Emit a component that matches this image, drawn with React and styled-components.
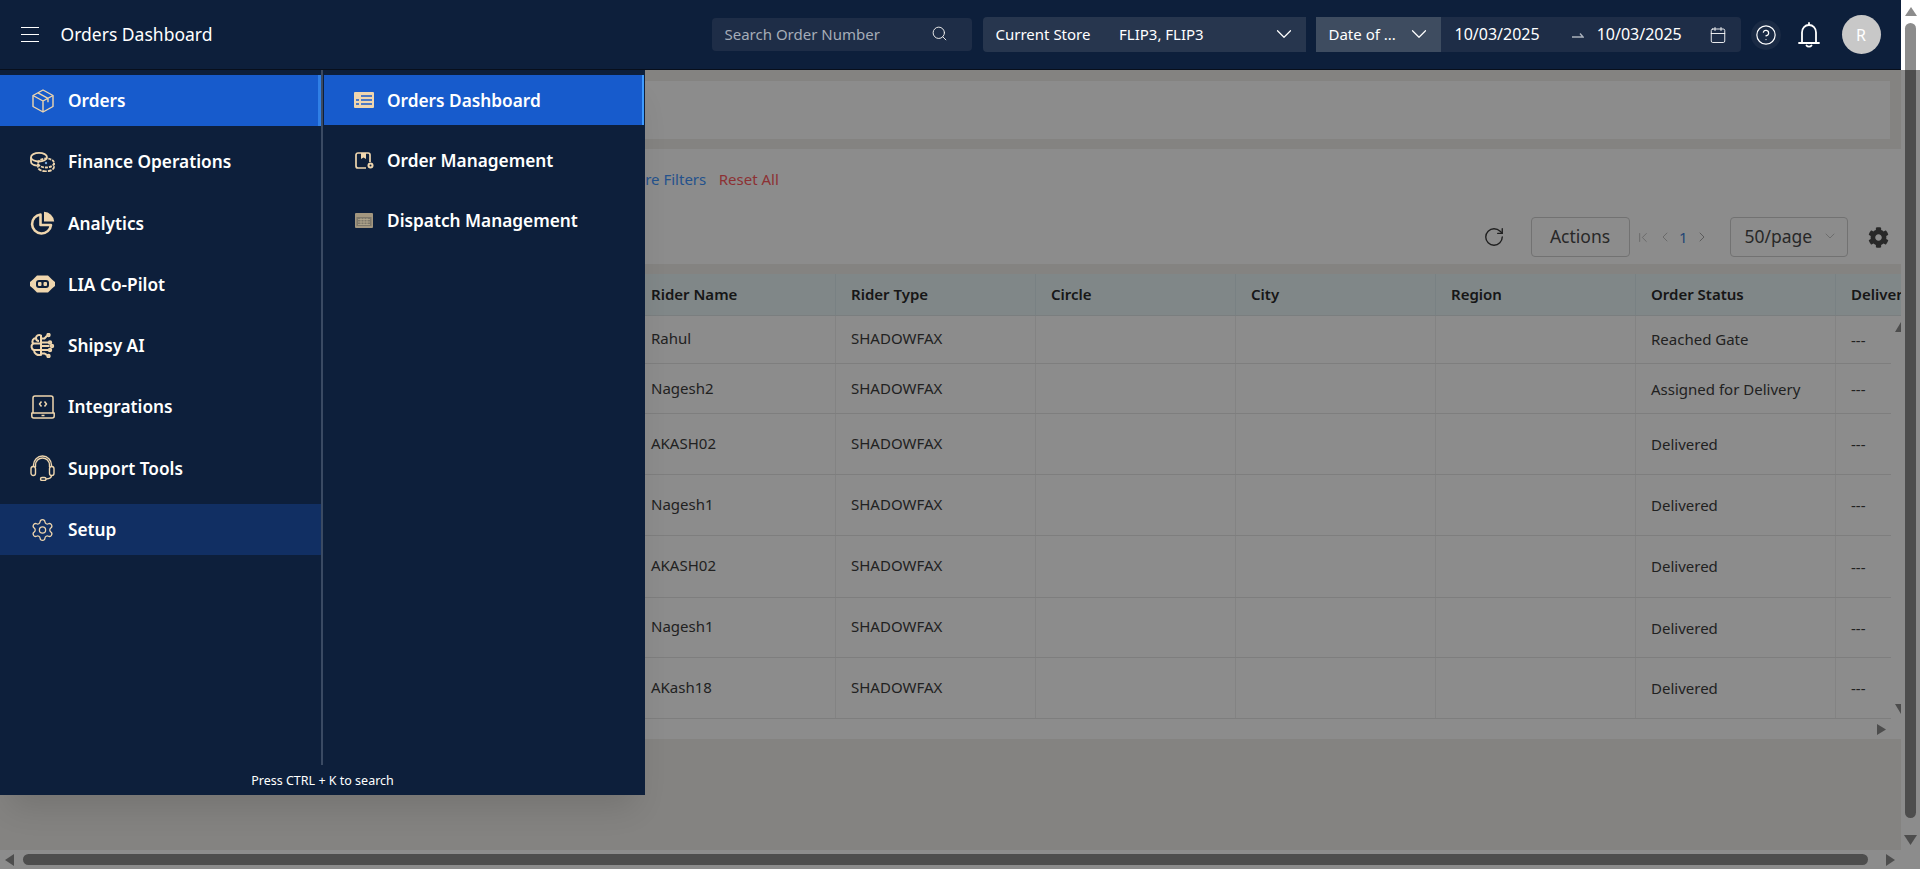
import React from 'react'
import styled, { createGlobalStyle } from 'styled-components'
import {
  Search,
  ChevronDown,
  Calendar,
  CircleHelp,
  RotateCw,
  ChevronFirst,
  ChevronLeft,
  ChevronRight,
  Settings,
} from 'lucide-react'
import { FaCog } from 'react-icons/fa'

const NAVY = '#0d1f3b'
const TAN = '#efd6ae'

const GlobalStyle = createGlobalStyle`
  html, body {
    margin: 0;
    height: 100%;
    overflow: hidden;
    background: #fff;
    font-family: "Noto Sans", "Open Sans", sans-serif;
  }
  * { box-sizing: border-box; }
`

const Root = styled.div`
  position: relative;
  width: 1920px;
  height: 869px;
  display: grid;
  grid-template-columns: 1901px 19px;
  grid-template-rows: 850px 19px;
  overflow: hidden;
`

const Page = styled.div`
  background: #f1efeb;
  display: flex;
  flex-direction: column;
  overflow: hidden;
`

const Header = styled.header`
  height: 70px;
  flex-shrink: 0;
  background: ${NAVY};
  border-bottom: 1px solid #080f1c;
  display: flex;
  align-items: center;
  padding: 0 20.5px 0 21px;
  color: #fff;
`

const Burger = styled.div`
  width: 18px;
  height: 15px;
  display: flex;
  flex-direction: column;
  justify-content: space-between;
  span {
    display: block;
    height: 1.4px;
    background: #fff;
  }
`

const Title = styled.div`
  margin-left: 21.5px;
  padding-bottom: 2px;
  font-size: 17.5px;
  flex: 1;
`

const SearchBox = styled.div`
  width: 260px;
  height: 33px;
  background: #1e2d47;
  border-radius: 4px;
  display: flex;
  align-items: center;
  justify-content: space-between;
  padding: 0 24px 2px 13px;
  font-size: 15px;
  color: #a5acb7;
  margin-right: 11px;
  svg { color: #e8e8e8; }
`

const StoreSelect = styled.div`
  width: 323px;
  height: 35px;
  background: #27364e;
  border-radius: 4px 0 0 4px;
  display: flex;
  align-items: center;
  padding: 0 9px 2px 13px;
  font-size: 15px;
  margin-right: 10px;
  b {
    font-weight: 400;
    width: 123.5px;
  }
  span { flex: 1; }
`

const DateGroup = styled.div`
  width: 425px;
  height: 35px;
  background: #1e2d47;
  border-radius: 0 4px 4px 0;
  display: flex;
  align-items: center;
  font-size: 16px;
`

const DateType = styled.div`
  width: 125px;
  height: 100%;
  background: #3e4c60;
  display: flex;
  align-items: center;
  justify-content: space-between;
  padding: 0 9px 2px 13px;
  font-size: 15px;
`

const DateValue = styled.div`
  margin-left: ${({ $left }) => $left}px;
  padding-bottom: 2px;
`

const DateArrow = styled.svg`
  margin-left: 32px;
`

const CalendarIcon = styled(Calendar)`
  margin-left: 27px;
`

const HelpButton = styled.div`
  width: 30px;
  height: 30px;
  border-radius: 50%;
  background: #1a2a44;
  margin-left: 10px;
  display: flex;
  align-items: center;
  justify-content: center;
`

const Bell = styled.svg`
  margin-left: 17px;
  margin-right: 22px;
`

const Avatar = styled.div`
  width: 39px;
  height: 39px;
  border-radius: 50%;
  background: #c8c8c8;
  color: #fff;
  font-size: 16px;
  display: flex;
  align-items: center;
  justify-content: center;
`

const Content = styled.main`
  flex: 1;
  padding: 11px 0 0 10px;
  display: flex;
  flex-direction: column;
  gap: 10px;
`

const TopCard = styled.section`
  height: 58px;
  background: #fff;
  margin-right: 11px;
`

const FilterCard = styled.section`
  height: 115px;
  background: #fff;
  padding: 19px 12.5px 7px 0;
`

const FilterLinks = styled.div`
  height: 22px;
  display: flex;
  align-items: center;
  gap: 12.5px;
  padding-left: 612.5px;
  font-size: 15px;
`

const FilterLink = styled.span`
  color: ${({ $danger }) => ($danger ? '#ff5a5f' : '#4296ff')};
`

const Toolbar = styled.div`
  margin-top: 27px;
  height: 40px;
  display: flex;
  align-items: center;
  justify-content: flex-end;
  color: #3a3a3a;
`

const Refresh = styled(RotateCw)`
  margin-right: 26px;
`

const OutlineButton = styled.div`
  height: 40px;
  width: ${({ $width }) => $width}px;
  border: 1px solid #cfcfcf;
  border-radius: 4px;
  display: flex;
  align-items: center;
  justify-content: ${({ $between }) => ($between ? 'space-between' : 'center')};
  padding: ${({ $between }) => ($between ? '0 9px 2px 14px' : '0 0 2px')};
  font-size: 17.5px;
  color: #4a4a4a;
`

const Pager = styled.div`
  width: 100px;
  padding-left: 5px;
  display: flex;
  align-items: center;
  gap: 6.3px;
  font-size: 15px;
  color: #3f7fd6;
`

const PagerIcon = styled.span`
  width: 16px;
  display: flex;
  justify-content: center;
  color: ${({ $off }) => ($off ? '#b8b8b8' : '#999999')};
`

const Gear = styled(FaCog)`
  margin-left: 20px;
  color: #4a4a4a;
`

const TableCard = styled.section`
  height: 465px;
  background: #fff;
  overflow: hidden;
`

const HeadRow = styled.div`
  height: 42px;
  background: #e9f6f8;
  display: grid;
  grid-template-columns: 626px repeat(7, 200px);
  border-bottom: 1px solid #dfe6e8;
`

const HeadCell = styled.div`
  padding: 0 0 2px 15px;
  display: flex;
  align-items: center;
  font-size: 15px;
  font-weight: 600;
  color: #2b2b2b;
  border-right: 1px solid #dcebee;
  white-space: nowrap;
`

const BodyWrap = styled.div`
  display: flex;
  height: 403px;
`

const Rows = styled.div`
  width: 1881px;
  overflow: hidden;
  flex-shrink: 0;
`

const Row = styled.div`
  height: ${({ $h }) => $h}px;
  display: grid;
  grid-template-columns: 626px repeat(7, 200px);
  border-bottom: 1px solid #e6e6e6;
`

const Cell = styled.div`
  padding-left: 15px;
  padding-bottom: ${({ $raise }) => $raise || 0}px;
  display: flex;
  align-items: center;
  font-size: 15px;
  color: #3d3d3d;
  border-right: 1px solid #eeeeee;
  white-space: nowrap;
`

const TableVBar = styled.div`
  flex: 1;
  display: flex;
  flex-direction: column;
  justify-content: space-between;
  align-items: flex-end;
  padding: 6px 0 5px;
  color: #8c8c8c;
`

const TableHBar = styled.div`
  height: 20px;
  padding-right: 15px;
  display: flex;
  align-items: center;
  justify-content: flex-end;
  color: #8c8c8c;
`

const VBar = styled.div`
  background: #fff;
  display: flex;
  flex-direction: column;
  align-items: center;
  padding: 7px 0 5px;
  color: #8c8c8c;
`

const VThumb = styled.div`
  width: 11px;
  height: 795px;
  margin: 7px 0 17px;
  border-radius: 6px;
  background: #8c8c8c;
`

const HBar = styled.div`
  background: #fff;
  display: flex;
  align-items: center;
  padding: 0 6px 0 5px;
  color: #8c8c8c;
`

const HThumb = styled.div`
  width: 1845px;
  height: 11px;
  margin: 0 18px 0 9px;
  border-radius: 6px;
  background: #8c8c8c;
`

const Corner = styled.div`
  background: #fff;
`

const Overlay = styled.div`
  position: absolute;
  inset: 70px 0 0 0;
  background: rgba(0, 0, 0, 0.45);
  z-index: 10;
`

const MenuPanel = styled.nav`
  position: absolute;
  top: 70px;
  left: 0;
  width: 645px;
  height: 725px;
  background: ${NAVY};
  box-shadow: 0 22px 30px -10px rgba(0, 0, 0, 0.12);
  display: flex;
  flex-direction: column;
  z-index: 20;
  color: #fff;
`

const MenuColumns = styled.div`
  height: 695px;
  display: flex;
`

const PrimaryList = styled.div`
  width: 323px;
  border-right: 2px solid #3a4a63;
  padding-top: 5px;
`

const SecondaryList = styled.div`
  flex: 1;
  padding: 5px 1px 0 1px;
  display: flex;
  flex-direction: column;
  gap: 10px;
`

const PrimaryItem = styled.div`
  height: 51px;
  margin-bottom: 10.3px;
  display: flex;
  align-items: center;
  gap: 13px;
  padding-left: 30px;
  font-size: 17.25px;
  font-weight: 600;
  background: ${({ $state }) =>
    $state === 'active' ? '#175bcc' : $state === 'hover' ? '#112f63' : 'transparent'};
  border-right: 3px solid
    ${({ $state }) => ($state === 'active' ? '#2f7fe6' : 'transparent')};
`

const SecondaryItem = styled.div`
  height: 50px;
  display: flex;
  align-items: center;
  gap: 13px;
  padding-left: 30px;
  font-size: 17.25px;
  font-weight: 600;
  background: ${({ $active }) => ($active ? '#175bcc' : 'transparent')};
  border-right: 2px solid ${({ $active }) => ($active ? '#3d9bff' : 'transparent')};
`

const IconBox = styled.span`
  width: ${({ $w }) => $w || 25}px;
  display: flex;
  align-items: center;
  justify-content: center;
  flex-shrink: 0;
  color: ${TAN};
`

const MenuFooter = styled.div`
  flex: 1;
  display: flex;
  align-items: center;
  justify-content: center;
  font-size: 12.5px;
`

const BoxIcon = () => (
  <svg width="22" height="24" viewBox="0 0 22 24" fill="none" stroke={TAN} strokeWidth="1.4" strokeLinejoin="round">
    <path d="M11 1 21 6.500v11L11 23 1 17.500v-11z" />
    <path d="M1 6.500 11 12l10-5.500M11 12v11M6 3.800l10 5.500v4" />
  </svg>
)

const CoinsIcon = () => (
  <svg width="25" height="20" viewBox="0 0 25 20" fill="none" stroke={TAN} strokeWidth="1.800">
    <ellipse cx="9" cy="5.200" rx="8" ry="4.300" />
    <path d="M1 5.200v4.300c0 2.200 3 3.800 6 4.200" />
    <ellipse cx="16" cy="11" rx="8" ry="4.500" strokeDasharray="3 1" />
    <path d="M8 11.500v3.500c0 2.500 3.500 4.300 8 4.300s8-1.800 8-4.300v-4" strokeDasharray="4 1" />
    <circle cx="16" cy="11" r="1.200" fill="#7aa7d8" stroke="none" />
  </svg>
)

const PieIcon = () => (
  <svg width="25" height="25" viewBox="0 0 25 25" fill="none">
    <path d="M10.500 3.500a9.500 9.500 0 1 0 10.500 10.500H10.500z" stroke={TAN} strokeWidth="2.600" strokeLinejoin="round" />
    <path d="M14 .8V10.500h10.200A10.500 10.500 0 0 0 14 .8z" fill={TAN} />
  </svg>
)

const RobotIcon = () => (
  <svg width="25" height="18" viewBox="0 0 25 18" fill="none">
    <path d="M7 .5h11l4 4 3 2.500v4l-3 2.500-4 4H7l-4-4-3-2.500V7l3-2.500z" fill={TAN} />
    <rect x="6" y="5" width="13" height="8" rx="3" fill={NAVY} />
    <rect x="8" y="7" width="3.500" height="4" rx="1" fill={TAN} />
    <rect x="13.500" y="7" width="3.500" height="4" rx="1" fill={TAN} />
  </svg>
)

const BrainIcon = () => (
  <svg width="25" height="25" viewBox="0 0 25 25" fill="none" stroke={TAN} strokeWidth="2">
    <path d="M11 2.500C8.500 1 6 2.800 6 5 3 5.200 1.500 8 3 10.500.8 12.500 1 16 4 17.200c0 3 3.500 5.800 7 4.500z" />
    <path d="M2.500 10.500H11M4 17h7M6 5c0 2 1 3 3 3" />
    <path d="M11 5.500h3.500L17 2.800M11 9.500h7M11 13h8.500M11 17h7M11 20.500h3.500l2.500 1.700" />
    <circle cx="18.500" cy="2" r="1.200" />
    <circle cx="20" cy="9.500" r="1.200" />
    <circle cx="22" cy="13" r="1.200" />
    <circle cx="20" cy="17" r="1.200" />
    <circle cx="18.500" cy="23" r="1.200" />
  </svg>
)

const LaptopIcon = () => (
  <svg width="24" height="24" viewBox="0 0 24 24" fill="none" stroke={TAN} strokeWidth="1.500" strokeLinejoin="round">
    <path d="M2 18V3a2 2 0 0 1 2-2h16a2 2 0 0 1 2 2v15" />
    <path d="M.8 18h22.400v3a2 2 0 0 1-2 2H2.800a2 2 0 0 1-2-2z" />
    <path d="M10.500 6.500 8.500 9l2 2.500M13.500 6.500l2 2.500-2 2.500M10.500 20.500h3" />
  </svg>
)

const HeadsetIcon = () => (
  <svg width="25" height="26" viewBox="0 0 25 26" fill="none" stroke={TAN} strokeWidth="1.400">
    <path d="M3.500 12V10a9 9 0 0 1 18 0v2" />
    <path d="M5.500 12V10a7 7 0 0 1 14 0v2" />
    <rect x="1" y="11.500" width="4.500" height="9" rx="2.200" />
    <rect x="19.500" y="11.500" width="4.500" height="9" rx="2.200" />
    <path d="M21.500 20.500c0 2.500-2.500 3.300-5.500 3.500" />
    <rect x="10.500" y="22.500" width="5.500" height="3" rx="1.500" />
  </svg>
)

const ListIcon = () => (
  <svg width="20" height="16" viewBox="0 0 20 16">
    <rect width="20" height="16" rx="1" fill={TAN} />
    <path d="M7 4h11M7 8h11M7 12h11M2 8h3M2 12h3" stroke="#175bcc" strokeWidth="1.500" />
  </svg>
)

const BagIcon = () => (
  <svg width="19" height="17" viewBox="0 0 19 17" fill="none">
    <path d="M11 16H3a2 2 0 0 1-2-2V3a2 2 0 0 1 2-2h10a2 2 0 0 1 2 2v7" stroke={TAN} strokeWidth="1.700" />
    <path d="M6 1h5v6L8.500 5.500 6 7z" fill={TAN} />
    <circle cx="15.500" cy="13.500" r="3" fill={TAN} />
    <circle cx="15.500" cy="13.500" r="1" fill={NAVY} />
  </svg>
)

const CrateIcon = () => (
  <svg width="18" height="15" viewBox="0 0 18 15">
    <rect width="18" height="15" rx="1" fill="#a2967f" />
    <rect x="1.500" y="4" width="15" height="9" fill="#7d776a" />
    <path d="M3 6.500h12M3 9h12M3 11.500h12M6 5v7M9 5v7M12 5v7" stroke="#b5a98f" strokeWidth="0.800" />
  </svg>
)

const Triangle = ({ points, w, h }) => (
  <svg width={w} height={h} viewBox={`0 0 ${w} ${h}`}>
    <polygon points={points} fill="currentColor" />
  </svg>
)

const primaryItems = [
  { label: 'Orders', icon: <BoxIcon />, state: 'active' },
  { label: 'Finance Operations', icon: <CoinsIcon /> },
  { label: 'Analytics', icon: <PieIcon /> },
  { label: 'LIA Co-Pilot', icon: <RobotIcon /> },
  { label: 'Shipsy AI', icon: <BrainIcon /> },
  { label: 'Integrations', icon: <LaptopIcon /> },
  { label: 'Support Tools', icon: <HeadsetIcon /> },
  { label: 'Setup', icon: <Settings size={32} strokeWidth={1.2} />, state: 'hover' },
]

const secondaryItems = [
  { label: 'Orders Dashboard', icon: <ListIcon />, active: true },
  { label: 'Order Management', icon: <BagIcon /> },
  { label: 'Dispatch Management', icon: <CrateIcon /> },
]

const columns = ['Rider Name', 'Rider Type', 'Circle', 'City', 'Region', 'Order Status', 'Delivery Date']

const orders = [
  { rider: 'Rahul', status: 'Reached Gate', h: 48, riderRaise: 4, statusRaise: 2 },
  { rider: 'Nagesh2', status: 'Assigned for Delivery', h: 50, riderRaise: 2 },
  { rider: 'AKASH02', status: 'Delivered', h: 61, riderRaise: 3 },
  { rider: 'Nagesh1', status: 'Delivered', h: 61, riderRaise: 3 },
  { rider: 'AKASH02', status: 'Delivered', h: 62, riderRaise: 3, statusRaise: 2 },
  { rider: 'Nagesh1', status: 'Delivered', h: 60, riderRaise: 3 },
  { rider: 'AKash18', status: 'Delivered', h: 61, riderRaise: 3 },
]

const App = () => (
  <>
    <GlobalStyle />
    <Root>
      <Page>
        <Header>
          <Burger>
            <span />
            <span />
            <span />
          </Burger>
          <Title>Orders Dashboard</Title>
          <SearchBox>
            Search Order Number
            <Search size={17} strokeWidth={1.4} />
          </SearchBox>
          <StoreSelect>
            <b>Current Store</b>
            <span>FLIP3, FLIP3</span>
            <ChevronDown size={26} strokeWidth={1.1} />
          </StoreSelect>
          <DateGroup>
            <DateType>
              Date of ...
              <ChevronDown size={26} strokeWidth={1.1} />
            </DateType>
            <DateValue $left={14}>10/03/2025</DateValue>
            <DateArrow width="12" height="8" viewBox="0 0 12 8" fill="none" stroke="#aab1bc" strokeWidth="1.400">
              <path d="M0 6h11L8 2.500" />
            </DateArrow>
            <DateValue $left={13}>10/03/2025</DateValue>
            <CalendarIcon size={18} strokeWidth={1.2} />
          </DateGroup>
          <HelpButton>
            <CircleHelp size={22} strokeWidth={1.3} />
          </HelpButton>
          <Bell width="22" height="26" viewBox="0 0 22 26" fill="none" stroke="#fff" strokeWidth="1.800" strokeLinecap="round">
            <path d="M4 20.500V10.500C4 6 7 3 11 3s7 3 7 7.500v10" />
            <path d="M1 21h20M11 1v2M8.500 23.500c1 1.500 4 1.500 5 0" />
          </Bell>
          <Avatar>R</Avatar>
        </Header>

        <Content>
          <TopCard />
          <FilterCard>
            <FilterLinks>
              <FilterLink>More Filters</FilterLink>
              <FilterLink $danger>Reset All</FilterLink>
            </FilterLinks>
            <Toolbar>
              <Refresh size={22} strokeWidth={1.5} />
              <OutlineButton $width={99}>Actions</OutlineButton>
              <Pager>
                <PagerIcon $off><ChevronFirst size={21} strokeWidth={1.3} /></PagerIcon>
                <PagerIcon $off><ChevronLeft size={22} strokeWidth={1.3} /></PagerIcon>
                1
                <PagerIcon><ChevronRight size={22} strokeWidth={1.3} /></PagerIcon>
              </Pager>
              <OutlineButton $width={118} $between>
                50/page
                <PagerIcon $off><ChevronDown size={24} strokeWidth={1.2} /></PagerIcon>
              </OutlineButton>
              <Gear size={21} />
            </Toolbar>
          </FilterCard>
          <TableCard>
            <HeadRow>
              <span />
              {columns.map((c) => (
                <HeadCell key={c}>{c}</HeadCell>
              ))}
            </HeadRow>
            <BodyWrap>
              <Rows>
                {orders.map((o, i) => (
                  <Row key={i} $h={o.h}>
                    <span />
                    <Cell $raise={o.riderRaise}>{o.rider}</Cell>
                    <Cell $raise={o.riderRaise}>SHADOWFAX</Cell>
                    <Cell />
                    <Cell />
                    <Cell />
                    <Cell $raise={o.statusRaise}>{o.status}</Cell>
                    <Cell>---</Cell>
                  </Row>
                ))}
              </Rows>
              <TableVBar>
                <Triangle w={6} h={10} points="0,10 6,0 6,10" />
                <Triangle w={6} h={10} points="0,0 6,0 6,10" />
              </TableVBar>
            </BodyWrap>
            <TableHBar>
              <Triangle w={9} h={11} points="0,0 9,5.500 0,11" />
            </TableHBar>
          </TableCard>
        </Content>
      </Page>

      <VBar>
        <Triangle w={12} h={9} points="6,0 12,9 0,9" />
        <VThumb />
        <Triangle w={13} h={10} points="0,0 13,0 6.500,10" />
      </VBar>
      <HBar>
        <Triangle w={9} h={12} points="9,0 9,12 0,6" />
        <HThumb />
        <Triangle w={9} h={12} points="0,0 9,6 0,12" />
      </HBar>
      <Corner />

      <Overlay />
      <MenuPanel>
        <MenuColumns>
          <PrimaryList>
            {primaryItems.map((item) => (
              <PrimaryItem key={item.label} $state={item.state}>
                <IconBox>{item.icon}</IconBox>
                {item.label}
              </PrimaryItem>
            ))}
          </PrimaryList>
          <SecondaryList>
            {secondaryItems.map((item) => (
              <SecondaryItem key={item.label} $active={item.active}>
                <IconBox $w={20}>{item.icon}</IconBox>
                {item.label}
              </SecondaryItem>
            ))}
          </SecondaryList>
        </MenuColumns>
        <MenuFooter>Press CTRL + K to search</MenuFooter>
      </MenuPanel>
    </Root>
  </>
)

export default App
